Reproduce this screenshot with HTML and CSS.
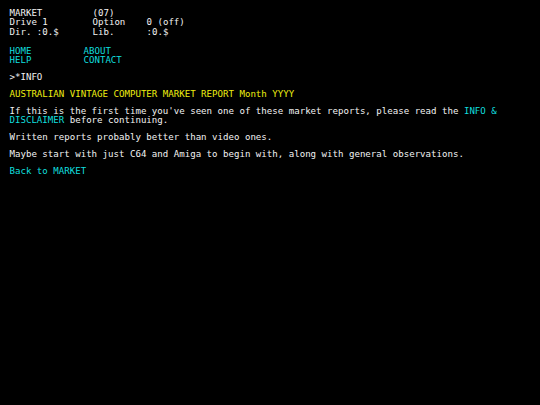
FILE: index.html
```html
<!DOCTYPE html>
<html>
<head>
<meta charset="utf-8">
<link rel="stylesheet" href="styles.css">
</head>
<body>
<div class="screen">
  <div class="status">
    <span>MARKET</span><span>(07)</span><span></span>
    <span>Drive 1</span><span>Option</span><span>0 (off)</span>
    <span>Dir. :0.$</span><span>Lib.</span><span>:0.$</span>
  </div>
  <div class="nav">
    <a class="link" href="#">HOME</a><a class="link" href="#">ABOUT</a>
    <a class="link" href="#">HELP</a><a class="link" href="#">CONTACT</a>
  </div>
  <p class="para">&gt;*INFO</p>
  <p class="para title">AUSTRALIAN VINTAGE COMPUTER MARKET REPORT Month YYYY</p>
  <p class="para">If this is the first time you've seen one of these market reports, please read the <a class="link" href="#">INFO &amp; DISCLAIMER</a> before continuing.</p>
  <p class="para">Written reports probably better than video ones.</p>
  <p class="para">Maybe start with just C64 and Amiga to begin with, along with general observations.</p>
  <p class="para"><a class="link" href="#">Back to MARKET</a></p>
</div>
</body>
</html>
```
FILE: styles.css
```css
html, body {
  margin: 0;
  padding: 0;
  background: #000;
}
.screen {
  padding: 9px 10px 0 9.5px;
  width: 500px;
  font-family: "DejaVu Sans Mono", "Liberation Mono", monospace;
  font-size: 9.1px;
  line-height: 9.4px;
  color: #f2f2f2;
}
.status {
  display: grid;
  grid-template-columns: 83px 54px auto;
}
.nav {
  display: grid;
  grid-template-columns: 74px auto;
  margin-top: 9.4px;
}
.link {
  color: #10dede;
  text-decoration: none;
}
.para {
  margin: 7.5px 0 0 0;
}
.title {
  color: #eeee10;
}
```
